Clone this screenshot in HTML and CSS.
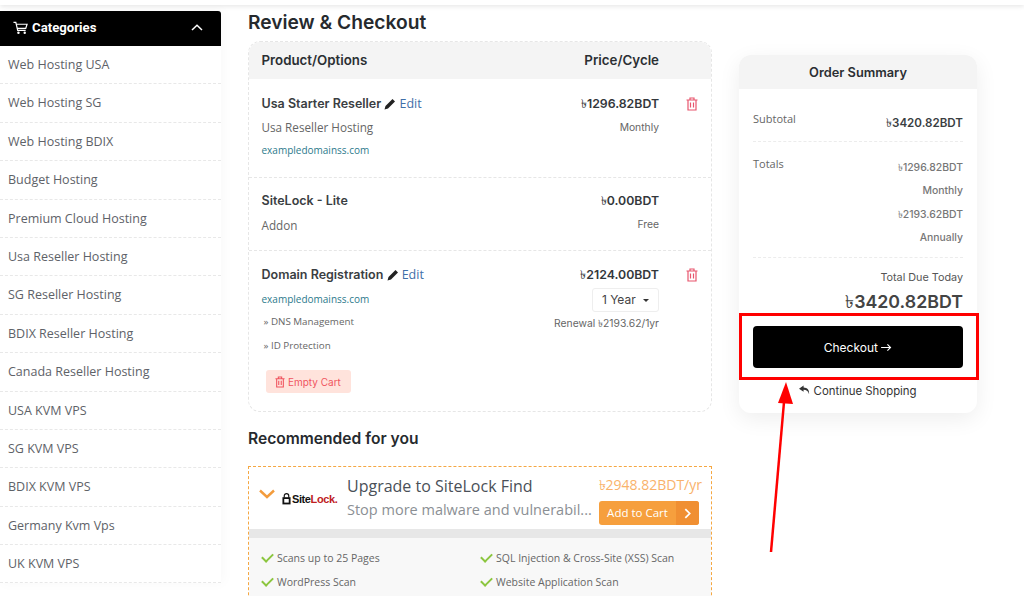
FILE: index.html

```html
<!DOCTYPE html>
<html lang="en">
<head>
  <meta charset="UTF-8" />
  <meta name="viewport" content="width=device-width, initial-scale=1.0"/>
  <title>Review &amp; Checkout</title>
  <link rel="stylesheet" href="styles.css">
</head>
<body>
  <div class="topbar"></div>
  <div class="page">
    <aside class="sidebar">
      <div class="side-head">
        <svg class="cart" viewBox="0 0 16 14" width="15" height="14"><path d="M0.5 1H3L5 9.5H13.5M3.6 3H15L13.6 7.5H4.6" fill="none" stroke="#fff" stroke-width="1.3"/><circle cx="5.8" cy="12" r="1.3" fill="#fff"/><circle cx="12.5" cy="12" r="1.3" fill="#fff"/></svg>
        <span>Categories</span>
        <svg class="caret-up" viewBox="0 0 12 7" width="12" height="7"><path d="M1 6L6 1.2L11 6" fill="none" stroke="#fff" stroke-width="1.5"/></svg>
      </div>
      <ul class="side-list">
        <li>Web Hosting USA</li>
        <li>Web Hosting SG</li>
        <li>Web Hosting BDIX</li>
        <li>Budget Hosting</li>
        <li>Premium Cloud Hosting</li>
        <li>Usa Reseller Hosting</li>
        <li>SG Reseller Hosting</li>
        <li>BDIX Reseller Hosting</li>
        <li>Canada Reseller Hosting</li>
        <li>USA KVM VPS</li>
        <li>SG KVM VPS</li>
        <li>BDIX KVM VPS</li>
        <li>Germany Kvm Vps</li>
        <li>UK KVM VPS</li>
      </ul>
    </aside>

    <main class="main">
      <h1>Review &amp; Checkout</h1>
      <section class="cart-card">
        <div class="cart-head"><span>Product/Options</span><span>Price/Cycle</span></div>

        <div class="cart-row row-one">
          <div class="info">
            <p class="name">Usa Starter Reseller <svg class="pencil" viewBox="0 0 12 12" width="12" height="12"><path d="M0.5 11.5L1.5 8L8.5 1L11 3.5L4 10.5Z" fill="#222"/></svg> <a class="edit">Edit</a></p>
            <p class="group">Usa Reseller Hosting</p>
            <p class="domain">exampledomainss.com</p>
          </div>
          <div class="price">
            <p class="amount"><i>৳</i>1296.82BDT</p>
            <p class="cycle">Monthly</p>
          </div>
          <svg class="trash" viewBox="0 0 12 14" width="12" height="14"><path d="M0.5 3H11.5M4 3V1H8V3M2 3V13H10V3M4.5 5.5V10.5M7.5 5.5V10.5" fill="none" stroke="#e8556d" stroke-width="1.2"/></svg>
        </div>

        <div class="cart-row row-two">
          <div class="info">
            <p class="name">SiteLock - Lite</p>
            <p class="group">Addon</p>
          </div>
          <div class="price">
            <p class="amount"><i>৳</i>0.00BDT</p>
            <p class="cycle">Free</p>
          </div>
          <span class="trash-space"></span>
        </div>

        <div class="cart-row row-three">
          <div class="info">
            <p class="name">Domain Registration <svg class="pencil" viewBox="0 0 12 12" width="12" height="12"><path d="M0.5 11.5L1.5 8L8.5 1L11 3.5L4 10.5Z" fill="#222"/></svg> <a class="edit">Edit</a></p>
            <p class="domain">exampledomainss.com</p>
            <p class="addon">» DNS Management</p>
            <p class="addon">» ID Protection</p>
            <button class="empty-cart"><svg viewBox="0 0 12 14" width="10" height="12"><path d="M0.5 3H11.5M4 3V1H8V3M2 3V13H10V3M4.5 5.5V10.5M7.5 5.5V10.5" fill="none" stroke="#f0555f" stroke-width="1.3"/></svg> Empty Cart</button>
          </div>
          <div class="price">
            <p class="amount"><i>৳</i>2124.00BDT</p>
            <div class="year-select">1 Year <b></b></div>
            <p class="cycle renewal">Renewal <i>৳</i>2193.62/1yr</p>
          </div>
          <svg class="trash" viewBox="0 0 12 14" width="12" height="14"><path d="M0.5 3H11.5M4 3V1H8V3M2 3V13H10V3M4.5 5.5V10.5M7.5 5.5V10.5" fill="none" stroke="#e8556d" stroke-width="1.2"/></svg>
        </div>
      </section>

      <h2>Recommended for you</h2>
      <section class="upsell">
        <div class="upsell-top">
          <svg class="chevron" viewBox="0 0 16 10" width="16" height="10"><path d="M1 1.5L8 8L15 1.5" fill="none" stroke="#f39c3d" stroke-width="2.4"/></svg>
          <div class="logo"><svg viewBox="0 0 10 13" width="9" height="12"><path d="M2.5 5V3a2.5 2.5 0 0 1 5 0V5" fill="none" stroke="#111" stroke-width="1.3"/><rect x="0.5" y="4.5" width="9" height="8" fill="#111"/><rect x="2.5" y="6.5" width="5" height="4" fill="#fff"/></svg><span class="logo-site">Site</span><span class="logo-lock">Lock.</span></div>
          <div class="upsell-text">
            <p class="upsell-title">Upgrade to SiteLock Find</p>
            <p class="upsell-sub">Stop more malware and vulnerabil...</p>
          </div>
          <div class="upsell-buy">
            <p class="upsell-price"><i>৳</i>2948.82BDT/yr</p>
            <button class="add-cart"><span>Add to Cart</span><b><svg viewBox="0 0 8 12" width="7" height="11"><path d="M1.5 1L6.5 6L1.5 11" fill="none" stroke="#fff" stroke-width="2"/></svg></b></button>
          </div>
        </div>
        <div class="upsell-bar"></div>
        <ul class="features">
          <li>Scans up to 25 Pages</li>
          <li>SQL Injection &amp; Cross-Site (XSS) Scan</li>
          <li>WordPress Scan</li>
          <li>Website Application Scan</li>
        </ul>
      </section>
    </main>

    <aside class="summary">
      <div class="sum-head">Order Summary</div>
      <div class="sum-body">
        <div class="sum-row sub-row">
          <span>Subtotal</span>
          <strong><i>৳</i>3420.82BDT</strong>
        </div>
        <div class="sum-row total-row">
          <span>Totals</span>
          <div class="sum-lines">
            <p><i>৳</i>1296.82BDT</p>
            <p>Monthly</p>
            <p><i>৳</i>2193.62BDT</p>
            <p>Annually</p>
          </div>
        </div>
        <p class="due-label">Total Due Today</p>
        <p class="due-amount"><i>৳</i>3420.82BDT</p>
        <button class="checkout">Checkout <svg viewBox="0 0 12 10" width="11" height="9"><path d="M0 5H10.5M7 1.5L10.5 5L7 8.5" fill="none" stroke="#fff" stroke-width="1.2"/></svg></button>
        <a class="continue"><svg viewBox="0 0 12 10" width="11" height="10"><path d="M5 0L0 3.5L5 7V4.8C8 4.8 10 6 11 9.5C11.5 5 9 2.3 5 2.2Z" fill="#333"/></svg> Continue Shopping</a>
      </div>
    </aside>
  </div>

  <!-- annotation drawn over the page -->
  <div class="mark-box"></div>
  <svg class="mark-arrow" viewBox="0 0 30 180" width="30" height="180"><path d="M7 172L20 22" stroke="#f00" stroke-width="2.5" fill="none"/><path d="M22 2L29 24L14 23Z" fill="#f00"/></svg>
</body>
</html>
```

FILE: styles.css

```css
* {
  box-sizing: border-box;
}
html, body {
  height: 596px;
  overflow: hidden;
}
body {
  margin: 0;
  background: #fff;
  color: #333;
  font-family: 'Open Sans', sans-serif;
  position: relative;
}
p {
  margin: 0;
}
i {
  font-style: normal;
  font-weight: 400;
  font-family: 'Noto Sans', 'DejaVu Sans', sans-serif;
}
.topbar {
  height: 5px;
  background: #fff;
  box-shadow: 0 1px 5px rgba(0,0,0,0.12);
}
.page {
  display: flex;
  align-items: flex-start;
  height: 591px;
  overflow: hidden;
  padding-top: 6px;
}

/* sidebar */
.sidebar {
  width: 221px;
  flex: none;
  background: #fff;
  box-shadow: 2px 0 12px rgba(0,0,0,0.03);
}
.side-head {
  height: 35px;
  background: #000;
  border-top-right-radius: 3px;
  color: #fff;
  display: flex;
  align-items: center;
  padding: 0 18px 2px 13px;
  font-family: Roboto, sans-serif;
  font-size: 13.2px;
  font-weight: 700;
}
.cart {
  margin-right: 4px;
}
.caret-up {
  margin-left: auto;
}
.side-list {
  list-style: none;
  margin: 0;
  padding: 0;
  font-size: 12.5px;
  color: #5e6268;
}
.side-list li {
  height: 38.4px;
  line-height: 38px;
  padding-left: 8px;
  border-bottom: 1px dashed #e8e8e8;
}

/* middle column */
.main {
  width: 464px;
  flex: none;
  margin-left: 27px;
  font-family: Inter, sans-serif;
}
h1 {
  margin: 0;
  height: 30px;
  line-height: 22px;
  font-size: 19.2px;
  font-weight: 600;
  color: #262a2e;
}
.cart-card {
  border: 1px dashed #e6e6e6;
  border-radius: 12px;
  overflow: hidden;
  height: 371px;
}
.cart-head {
  height: 37px;
  background: #f4f4f4;
  display: flex;
  justify-content: space-between;
  align-items: center;
  padding: 0 52px 2px 12.5px;
  font-size: 13.3px;
  font-weight: 600;
  color: #2b2f33;
}
.cart-row {
  display: flex;
  padding: 16px 13px 0 12.5px;
  border-bottom: 1px dashed #e6e6e6;
}
.row-one {
  height: 99px;
}
.row-two {
  height: 73px;
  padding-top: 14px;
}
.row-two .group {
  margin-top: 7px;
}
.row-three {
  border-bottom: none;
  padding-top: 15px;
}
.info {
  flex: 1;
}
.name {
  font-size: 12.5px;
  font-weight: 600;
  color: #3a3e42;
  line-height: 18px;
}
.pencil {
  vertical-align: -2px;
}
.edit {
  font-family: 'Open Sans', sans-serif;
  font-size: 12.5px;
  font-weight: 400;
  color: #3f6fa8;
}
.group {
  font-family: 'Open Sans', sans-serif;
  font-size: 11.7px;
  color: #666;
  margin-top: 6px;
}
.domain {
  font-family: 'Open Sans', sans-serif;
  font-size: 10px;
  color: #2c7a8c;
  margin-top: 8px;
}
.addon {
  font-family: 'Open Sans', sans-serif;
  font-size: 9.8px;
  color: #666;
  margin: 9px 0 0 2px;
}
.addon + .addon {
  margin-top: 11px;
}
.empty-cart {
  display: block;
  margin: 18px 0 0 4px;
  height: 23px;
  width: 85px;
  padding: 0;
  border: none;
  border-radius: 3px;
  background: #ffe3dc;
  color: #f0555f;
  font-family: Inter, sans-serif;
  font-size: 10px;
}
.empty-cart svg {
  vertical-align: -2px;
}
.price {
  text-align: right;
  width: 180px;
}
.amount {
  font-size: 12.3px;
  font-weight: 600;
  color: #33373b;
  line-height: 18px;
}
.cycle {
  font-size: 10.3px;
  color: #666;
  margin-top: 8px;
}
.renewal {
  margin-top: 4px;
}
.year-select {
  display: inline-block;
  width: 67px;
  height: 24px;
  margin-top: 4px;
  border: 1px solid #eee;
  border-radius: 3px;
  font-size: 12px;
  line-height: 22px;
  text-align: center;
  color: #444;
}
.year-select b {
  display: inline-block;
  margin-left: 4px;
  vertical-align: 2px;
  border: 3.5px solid transparent;
  border-top-color: #333;
  border-bottom: none;
}
.trash {
  flex: none;
  margin: 2px 0 0 27px;
}
.trash-space {
  flex: none;
  width: 39px;
}

/* upsell */
h2 {
  margin: 17px 0 17px;
  font-size: 15.6px;
  line-height: 20px;
  font-weight: 600;
  color: #262a2e;
}
.upsell {
  border: 1px dashed #f5a742;
  height: 200px;
}
.upsell-top {
  height: 62px;
  display: flex;
  align-items: flex-start;
  font-family: 'Open Sans', sans-serif;
}
.chevron {
  margin: 22px 0 0 10px;
  flex: none;
}
.logo {
  width: 58px;
  margin: 26px 0 0 7px;
  flex: none;
  font-family: 'Liberation Sans', sans-serif;
  font-size: 11px;
  font-weight: 700;
  letter-spacing: -0.4px;
  display: flex;
  align-items: center;
}
.logo-site {
  color: #111;
  margin-left: 1px;
}
.logo-lock {
  color: #c0211f;
}
.upsell-text {
  margin-left: 7px;
  width: 247px;
}
.upsell-title {
  margin-top: 7px;
  font-size: 16px;
  line-height: 25px;
  color: #4a5058;
}
.upsell-sub {
  font-size: 14.5px;
  line-height: 22px;
  color: #8b8f94;
  white-space: nowrap;
}
.upsell-buy {
  flex: 1;
  text-align: right;
  padding-right: 9px;
}
.upsell-price {
  margin-top: 7px;
  font-size: 14px;
  line-height: 21px;
  color: #f9b26b;
}
.add-cart {
  display: inline-flex;
  width: 100px;
  height: 24px;
  margin: 6px 3px 0 0;
  padding: 0;
  border: none;
  border-radius: 3px;
  overflow: hidden;
  background: #f69f3d;
  color: #fff;
  font-family: 'Open Sans', sans-serif;
  font-size: 11.5px;
}
.add-cart span {
  flex: 1;
  line-height: 24px;
}
.add-cart b {
  width: 23px;
  background: #f08f32;
  display: flex;
  align-items: center;
  justify-content: center;
}
.upsell-bar {
  height: 9px;
  background: #e7e7e7;
}
.features {
  list-style: none;
  margin: 0;
  padding: 10px 0 0 12px;
  height: 130px;
  background: #f8f8f8;
  display: grid;
  grid-template-columns: 219px 1fr;
  grid-auto-rows: 24px;
  font-family: 'Open Sans', sans-serif;
  font-size: 10.5px;
  color: #666;
}
.features li {
  line-height: 20px;
  padding-left: 16px;
  position: relative;
}
.features li::before {
  content: "";
  position: absolute;
  left: 1px;
  top: 5px;
  width: 9px;
  height: 5px;
  border-left: 2px solid #8cc63f;
  border-bottom: 2px solid #8cc63f;
  transform: rotate(-45deg);
}

/* order summary */
.summary {
  width: 238px;
  flex: none;
  margin: 44px 0 0 27px;
  height: 358px;
  border-radius: 12px;
  box-shadow: 0 6px 22px rgba(0,0,0,0.07);
  overflow: hidden;
  font-family: Inter, sans-serif;
}
.sum-head {
  height: 34px;
  background: #f4f4f4;
  text-align: center;
  line-height: 35px;
  font-size: 12.8px;
  font-weight: 600;
  color: #2b2f33;
}
.sum-body {
  padding: 0 14px;
}
.sum-row {
  display: flex;
  justify-content: space-between;
  font-size: 11px;
  border-bottom: 1px dashed #ececec;
}
.sum-row > span {
  font-family: 'Open Sans', sans-serif;
  color: #666;
}
.sub-row {
  height: 53px;
  padding-top: 22px;
}
.sub-row strong {
  margin-top: 4px;
  font-size: 11.6px;
  font-weight: 600;
  color: #3a3e42;
}
.total-row {
  height: 116px;
  padding-top: 14px;
}
.sum-lines {
  text-align: right;
  font-size: 10.4px;
  font-weight: 500;
  color: #777;
  padding-top: 5px;
}
.sum-lines p {
  line-height: 12px;
  margin-bottom: 11px;
}
.due-label {
  margin-top: 13px;
  text-align: right;
  font-size: 10.8px;
  line-height: 14px;
  color: #555;
}
.due-amount {
  margin-top: 5px;
  text-align: right;
  font-size: 17.8px;
  line-height: 22px;
  font-weight: 600;
  color: #444;
}
.checkout {
  display: block;
  width: 100%;
  height: 42px;
  margin-top: 13px;
  border: none;
  border-radius: 4px;
  background: #000;
  color: #fff;
  font-family: Inter, sans-serif;
  font-size: 12px;
}
.continue {
  display: block;
  margin-top: 16px;
  text-align: center;
  font-size: 11.4px;
  line-height: 15px;
  color: #333;
}

/* annotation */
.mark-box {
  position: absolute;
  left: 739px;
  top: 313px;
  width: 240px;
  height: 67px;
  border: 3px solid #f00;
}
.mark-arrow {
  position: absolute;
  left: 764px;
  top: 380px;
}
```
